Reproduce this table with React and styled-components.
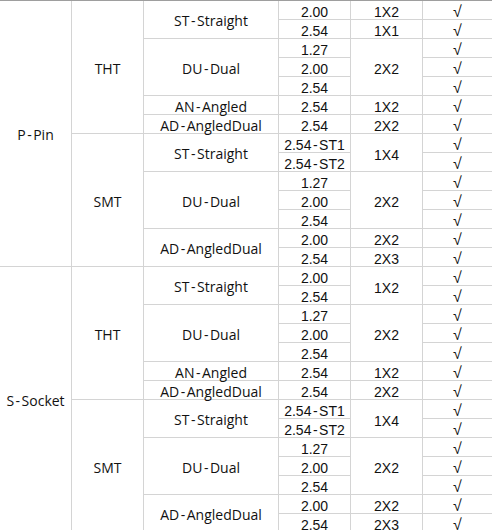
import React from "react";
import styled, { createGlobalStyle } from "styled-components";

const Global = createGlobalStyle`
  html, body {
    margin: 0;
    padding: 0;
    background: #fff;
  }
`;

const Sheet = styled.div`
  display: grid;
  grid-template-columns: 72px 72px 135px 72px 72px 69px;
  grid-auto-rows: 19px;
  width: 492px;
  border-top: 1px solid #9e9e9e;
  color: #111;
`;

const fonts = {
  txt: { family: `"Open Sans", "Noto Sans", sans-serif`, size: "14px", nudge: 3 },
  num: { family: `"Liberation Sans", Arial, sans-serif`, size: "14px", nudge: 4 },
  mark: { family: `"Liberation Sans", Arial, sans-serif`, size: "16px", nudge: 4 },
};

const Cell = styled.div`
  grid-column: ${(p) => p.$col};
  grid-row: ${(p) => p.$row} / span ${(p) => p.$span};
  box-sizing: border-box;
  display: flex;
  align-items: center;
  justify-content: center;
  padding-top: ${(p) => fonts[p.$kind].nudge}px;
  border-bottom: 1px solid #d4d4d4;
  border-right: ${(p) => (p.$col === 6 ? "none" : "1px solid #d4d4d4")};
  font-family: ${(p) => fonts[p.$kind].family};
  font-size: ${(p) => fonts[p.$kind].size};
  line-height: 1;
  white-space: nowrap;
`;

const Dash = styled.span`
  margin: 0 1.5px;
`;

const withDash = (text) => {
  const i = text.indexOf("-");
  if (i < 0) return text;
  return (
    <>
      {text.slice(0, i)}
      <Dash>-</Dash>
      {text.slice(i + 1)}
    </>
  );
};

const data = [
  {
    name: "P-Pin",
    mounts: [
      {
        name: "THT",
        styles: [
          { name: "ST-Straight", pitches: ["2.00", "2.54"], sizes: ["1X2", "1X1"] },
          { name: "DU-Dual", pitches: ["1.27", "2.00", "2.54"], sizes: ["2X2"] },
          { name: "AN-Angled", pitches: ["2.54"], sizes: ["1X2"] },
          { name: "AD-AngledDual", pitches: ["2.54"], sizes: ["2X2"] },
        ],
      },
      {
        name: "SMT",
        styles: [
          { name: "ST-Straight", pitches: ["2.54-ST1", "2.54-ST2"], sizes: ["1X4"] },
          { name: "DU-Dual", pitches: ["1.27", "2.00", "2.54"], sizes: ["2X2"] },
          { name: "AD-AngledDual", pitches: ["2.00", "2.54"], sizes: ["2X2", "2X3"] },
        ],
      },
    ],
  },
  {
    name: "S-Socket",
    mounts: [
      {
        name: "THT",
        styles: [
          { name: "ST-Straight", pitches: ["2.00", "2.54"], sizes: ["1X2"] },
          { name: "DU-Dual", pitches: ["1.27", "2.00", "2.54"], sizes: ["2X2"] },
          { name: "AN-Angled", pitches: ["2.54"], sizes: ["1X2"] },
          { name: "AD-AngledDual", pitches: ["2.54"], sizes: ["2X2"] },
        ],
      },
      {
        name: "SMT",
        styles: [
          { name: "ST-Straight", pitches: ["2.54-ST1", "2.54-ST2"], sizes: ["1X4"] },
          { name: "DU-Dual", pitches: ["1.27", "2.00", "2.54"], sizes: ["2X2"] },
          { name: "AD-AngledDual", pitches: ["2.00", "2.54"], sizes: ["2X2", "2X3"] },
        ],
      },
    ],
  },
];

const countRows = (mount) => mount.styles.reduce((n, s) => n + s.pitches.length, 0);

// flatten the nested spec into sheet cells with row spans
function buildCells() {
  const cells = [];
  let row = 1;
  data.forEach((type, ti) => {
    const typeRows = type.mounts.reduce((n, m) => n + countRows(m), 0);
    cells.push({ key: `t${ti}`, col: 1, row, span: typeRows, text: type.name, kind: "txt" });
    let mRow = row;
    type.mounts.forEach((mount, mi) => {
      const mRows = countRows(mount);
      cells.push({ key: `m${ti}${mi}`, col: 2, row: mRow, span: mRows, text: mount.name, kind: "txt" });
      let sRow = mRow;
      mount.styles.forEach((st, si) => {
        const n = st.pitches.length;
        cells.push({ key: `s${ti}${mi}${si}`, col: 3, row: sRow, span: n, text: st.name, kind: "txt" });
        st.pitches.forEach((p, pi) => {
          cells.push({ key: `p${ti}${mi}${si}${pi}`, col: 4, row: sRow + pi, span: 1, text: p, kind: "num" });
          cells.push({ key: `c${ti}${mi}${si}${pi}`, col: 6, row: sRow + pi, span: 1, text: "√", kind: "mark" });
        });
        if (st.sizes.length === 1) {
          cells.push({ key: `z${ti}${mi}${si}`, col: 5, row: sRow, span: n, text: st.sizes[0], kind: "num" });
        } else {
          st.sizes.forEach((z, zi) =>
            cells.push({ key: `z${ti}${mi}${si}${zi}`, col: 5, row: sRow + zi, span: 1, text: z, kind: "num" })
          );
        }
        sRow += n;
      });
      mRow += mRows;
    });
    row += typeRows;
  });
  return cells;
}

export default function App() {
  const cells = buildCells();
  return (
    <>
      <Global />
      <Sheet>
        {cells.map((c) => (
          <Cell key={c.key} $col={c.col} $row={c.row} $span={c.span} $kind={c.kind}>
            {withDash(c.text)}
          </Cell>
        ))}
      </Sheet>
    </>
  );
}
